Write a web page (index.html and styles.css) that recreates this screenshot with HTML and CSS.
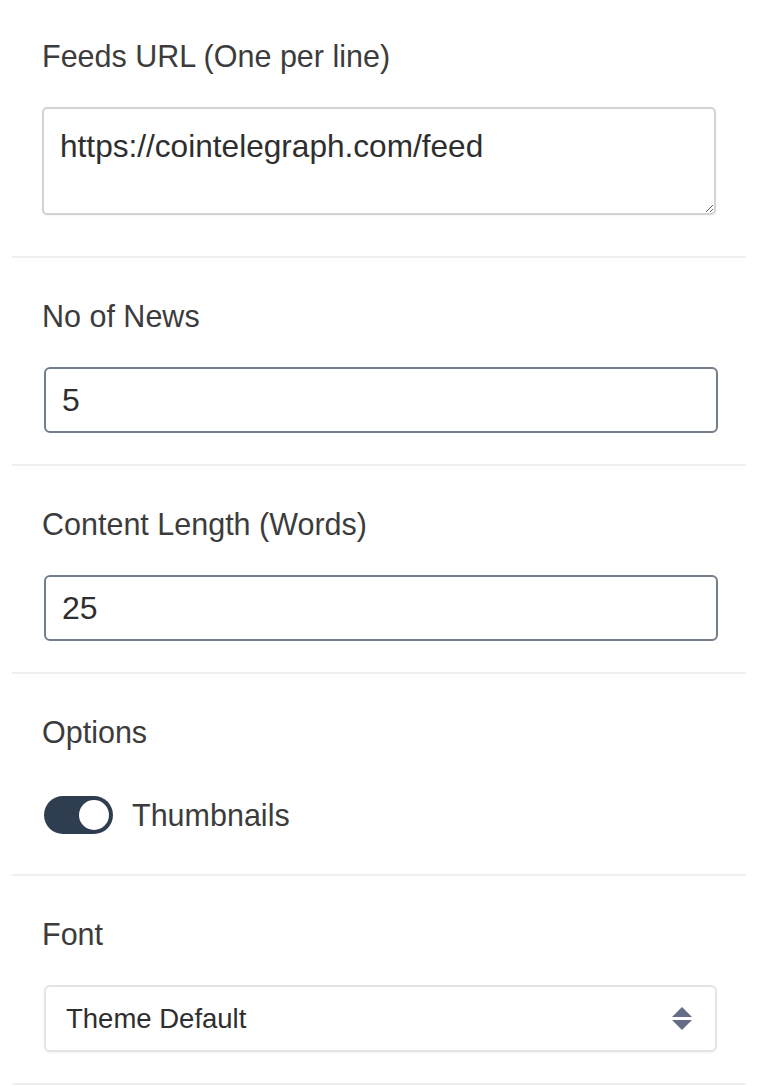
FILE: index.html
```html
<!DOCTYPE html>
<html lang="en">

<head>
    <meta charset="UTF-8">
    <meta name="viewport" content="width=device-width, initial-scale=1.0">
    <title>News Feed Settings</title>
    <link rel="stylesheet" href="styles.css">
</head>

<body>

    <div class="settings">

        <div class="field">
            <label class="fieldLabel" for="feedsUrl">Feeds URL (One per line)</label>
            <textarea id="feedsUrl" class="feedsInput">https://cointelegraph.com/feed</textarea>
        </div>

        <div class="field">
            <label class="fieldLabel" for="newsCount">No of News</label>
            <input id="newsCount" class="textInput" type="text" value="5">
        </div>

        <div class="field">
            <label class="fieldLabel" for="contentLength">Content Length (Words)</label>
            <input id="contentLength" class="textInput" type="text" value="25">
        </div>

        <div class="field">
            <span class="fieldLabel">Options</span>
            <label class="switchRow">
                <span class="switch"><span class="switchKnob"></span></span>
                <span class="switchText">Thumbnails</span>
            </label>
        </div>

        <div class="field">
            <label class="fieldLabel" for="fontSelect">Font</label>
            <div class="selectWrap">
                <select id="fontSelect" class="selectInput">
                    <option>Theme Default</option>
                </select>
                <svg class="selectArrows" width="20" height="23" viewBox="0 0 20 23">
                    <polygon points="10,0 20,10 0,10" fill="#646c87" />
                    <polygon points="0,13 20,13 10,23" fill="#646c87" />
                </svg>
            </div>
        </div>

    </div>

</body>

</html>
```

FILE: styles.css
```css
body,
html {
    margin: 0;
    padding: 0;
}

body {
    font-family: "Liberation Sans", Arial, sans-serif;
    background-color: #fff;
    color: #3c3c3c;
}

.settings {
    margin: 0 12px;
}

.field {
    padding: 36px 30px 31px;
    border-bottom: 2px solid #efefef;
}

.field:first-child {
    padding-top: 34px;
}

.fieldLabel {
    display: block;
    font-size: 30.5px;
    line-height: 45px;
    margin-bottom: 28px;
    color: #3c3c3c;
}

.feedsInput {
    display: block;
    box-sizing: border-box;
    width: 100%;
    height: 108px;
    margin: 0 0 10px;
    padding: 13px 16px;
    font-family: inherit;
    font-size: 31.6px;
    line-height: 48px;
    color: #2e2e2e;
    border: 2px solid #d3d3d3;
    border-radius: 5px;
    box-shadow: 0 1px 2px rgba(0, 0, 0, 0.05);
    resize: vertical;
}

.textInput {
    display: block;
    box-sizing: border-box;
    width: 100%;
    height: 66px;
    margin: 0 0 0 2px;
    padding: 0 16px;
    font-family: inherit;
    font-size: 32px;
    color: #2e2e2e;
    border: 2px solid #737d8a;
    border-radius: 6px;
    outline: none;
}

.switchRow {
    display: flex;
    align-items: center;
    gap: 19px;
    padding: 13px 0 9px 2px;
}

.switch {
    display: flex;
    justify-content: flex-end;
    align-items: center;
    box-sizing: border-box;
    width: 69px;
    height: 38px;
    padding: 0 4px;
    border-radius: 19px;
    background-color: #2f3d50;
}

.switchKnob {
    width: 30px;
    height: 30px;
    border-radius: 50%;
    background-color: #fff;
}

.switchText {
    font-size: 30.5px;
    line-height: 36px;
    color: #3c3c3c;
}

.selectWrap {
    position: relative;
    margin-left: 2px;
    width: 673px;
}

.selectInput {
    display: block;
    box-sizing: border-box;
    width: 100%;
    height: 67px;
    padding: 0 60px 0 20px;
    font-family: inherit;
    font-size: 27.5px;
    color: #2e2e2e;
    background-color: #fff;
    border: 2px solid #e4e4e4;
    border-radius: 6px;
    box-shadow: 0 1px 2px rgba(0, 0, 0, 0.05);
    appearance: none;
    -webkit-appearance: none;
    outline: none;
}

.selectArrows {
    position: absolute;
    right: 25px;
    top: 22px;
    pointer-events: none;
}
```
